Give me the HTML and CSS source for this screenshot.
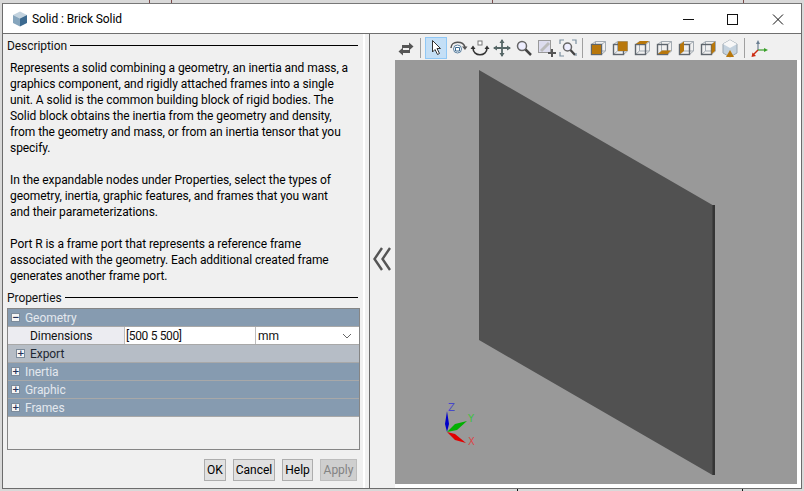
FILE: index.html
```html
<!DOCTYPE html>
<html lang="en">
<head>
<meta charset="utf-8">
<title>Solid : Brick Solid</title>
<link rel="stylesheet" href="styles.css">
</head>
<body>
<div class="window">
  <header class="titlebar">
    <svg class="app-icon" width="16" height="16" viewBox="0 0 16 16">
      <polygon points="8,0.5 15,4 8,7.5 1,4" fill="#c3d3df"/>
      <polygon points="1,4 8,7.5 8,15.5 1,12" fill="#86a5bd"/>
      <polygon points="15,4 8,7.5 8,15.5 15,12" fill="#3c6a90"/>
    </svg>
    <span class="title">Solid : Brick Solid</span>
    <div class="controls">
      <svg class="ctl" width="45" height="12" viewBox="0 0 45 12"><path d="M17 6.500H28" stroke="#111" fill="none"/></svg>
      <svg class="ctl" width="45" height="12" viewBox="0 0 45 12"><rect x="16.500" y="1.500" width="10" height="10" stroke="#111" fill="none"/></svg>
      <svg class="ctl" width="45" height="12" viewBox="0 0 45 12"><path d="M17 1.500L27 11.500M27 1.500L17 11.500" stroke="#111" fill="none"/></svg>
    </div>
  </header>
  <div class="body">
    <section class="left">
      <div class="legend"><span>Description</span><i></i></div>
      <div class="desc">
        <p>Represents a solid combining a geometry, an inertia and mass, a<br>graphics component, and rigidly attached frames into a single<br>unit. A solid is the common building block of rigid bodies. The<br>Solid block obtains the inertia from the geometry and density,<br>from the geometry and mass, or from an inertia tensor that you<br>specify.</p>
        <p>In the expandable nodes under Properties, select the types of<br>geometry, inertia, graphic features, and frames that you want<br>and their parameterizations.</p>
        <p>Port R is a frame port that represents a reference frame<br>associated with the geometry. Each additional created frame<br>generates another frame port.</p>
      </div>
      <div class="legend"><span>Properties</span><i></i></div>
      <div class="table">
        <div class="row head"><b class="box">&#8722;</b>Geometry</div>
        <div class="row param">
          <div class="cell label">Dimensions</div>
          <div class="cell value">[500 5 500]</div>
          <div class="cell unit">mm
            <svg width="10" height="6" viewBox="0 0 10 6"><path d="M1 1L5 5L9 1" stroke="#666" fill="none"/></svg>
          </div>
        </div>
        <div class="row sub"><b class="box">+</b>Export</div>
        <div class="row head"><b class="box">+</b>Inertia</div>
        <div class="row head"><b class="box">+</b>Graphic</div>
        <div class="row head"><b class="box">+</b>Frames</div>
      </div>
      <div class="buttons">
        <button class="btn btn-ok">OK</button>
        <button class="btn btn-cancel">Cancel</button>
        <button class="btn btn-help">Help</button>
        <button class="btn btn-apply" disabled>Apply</button>
      </div>
    </section>
    <div class="splitter">
      <svg width="20" height="24" viewBox="0 0 20 24"><path d="M9 1L1.500 12L9 23M17 1L9.500 12L17 23" stroke="#555" stroke-width="2.400" fill="none"/></svg>
    </div>
    <section class="right">
      <div class="toolbar">
        <svg class="tool" width="22" height="22" viewBox="0 0 22 22"><path d="M7 8H14V5.500L18.500 9.500L14 13.500V11H7Z" fill="#555"/><path d="M15 13H8V10.500L3.500 14.500L8 18.500V16H15Z" fill="#555"/></svg>
        <span class="sep"></span>
        <span class="tool active">
          <svg width="22" height="21" viewBox="0 0 22 21"><path d="M7.500 3.500V15L10 12.500L12.500 17.500L14.500 16.500L12 11.500H15.500Z" fill="#fff" stroke="#333"/></svg>
        </span>
        <svg class="tool" width="22" height="22" viewBox="0 0 22 22"><path d="M4 11C4 3.500 16 3.500 18 10" stroke="#555" stroke-width="1.500" fill="none"/><path d="M15 9.500H20.500L18 13Z" fill="#555"/><circle cx="10.500" cy="12" r="4" fill="#fff" stroke="#5b7f9f"/><path d="M8.500 10.500H12.500V14H8.500Z" fill="none" stroke="#3c6a90"/></svg>
        <svg class="tool" width="22" height="22" viewBox="0 0 22 22"><rect x="9" y="4" width="4" height="4" fill="#fff" stroke="#777"/><path d="M4 11C4 20 18 20 18 11" stroke="#333" stroke-width="1.600" fill="none"/><path d="M1.500 12H6.500L4 8.500ZM15.500 12H20.500L18 8.500Z" fill="#333"/></svg>
        <svg class="tool" width="22" height="22" viewBox="0 0 22 22"><path d="M11 3V19M3 11H19" stroke="#566" stroke-width="1.800"/><path d="M11 2L13.500 6H8.500ZM11 20L13.500 16H8.500ZM2 11L6 8.500V13.500ZM20 11L16 8.500V13.500Z" fill="#566"/></svg>
        <svg class="tool" width="22" height="22" viewBox="0 0 22 22"><circle cx="9" cy="9" r="4.500" fill="#eef" stroke="#666" stroke-width="1.500"/><path d="M12.500 12.500L18 18" stroke="#444" stroke-width="2.500"/></svg>
        <svg class="tool" width="22" height="22" viewBox="0 0 22 22"><rect x="3.500" y="3.500" width="12" height="12" fill="#dde" stroke="#999"/><path d="M6 14L14 6" stroke="#bbb" stroke-width="3"/><path d="M17 12V20M13 16H21" stroke="#555" stroke-width="2"/></svg>
        <svg class="tool" width="22" height="22" viewBox="0 0 22 22"><circle cx="10.500" cy="10" r="4" fill="#eef" stroke="#666" stroke-width="1.500"/><path d="M13.500 13L18 18" stroke="#444" stroke-width="2.300"/><path d="M3 7V3H7M15 3H19V7M3 15V19H7M19 16V19" stroke="#7b8f9f" stroke-width="1.200" fill="none"/></svg>
        <span class="sep"></span>
        <svg class="tool" width="22" height="22" viewBox="0 2 22 22"><use href="#cube"/><rect x="4.500" y="9.500" width="10" height="10" fill="#b8770b" stroke="#5f666d"/></svg>
        <svg class="tool" width="22" height="22" viewBox="0 2 22 22"><use href="#cube"/><rect x="9" y="6.500" width="9.500" height="9.500" fill="#b8770b"/></svg>
        <svg class="tool" width="22" height="22" viewBox="0 2 22 22"><use href="#cube"/><polygon points="5,9 9,6 18,6 14.500,9" fill="#b8770b"/></svg>
        <svg class="tool" width="22" height="22" viewBox="0 2 22 22"><use href="#cube"/><polygon points="5,19 9,15.500 18,15.500 14.500,19" fill="#b8770b"/></svg>
        <svg class="tool" width="22" height="22" viewBox="0 2 22 22"><use href="#cube"/><polygon points="5,9.500 9,6.500 9,16 5,19" fill="#b8770b"/></svg>
        <svg class="tool" width="22" height="22" viewBox="0 2 22 22"><use href="#cube"/><polygon points="14.500,9.500 18,6.500 18,16 14.500,19" fill="#b8770b"/></svg>
        <svg class="tool" width="22" height="22" viewBox="0 0 22 22"><polygon points="11,3 18,7 18,16 11,20 4,16 4,7" fill="#c4d2de" stroke="#9aa6b0"/><polygon points="11,3 18,7 11,11 4,7" fill="#f7f7f7"/><polygon points="11,13 15,20 7,20" fill="#b8770b"/></svg>
        <span class="sep"></span>
        <svg class="tool" width="22" height="22" viewBox="0 0 22 22"><path d="M9 5V13" stroke="#6b7f92" stroke-width="1.200"/><path d="M9 3L11 7H7Z" fill="#6b7f92"/><path d="M9 13H16" stroke="#3aa02a" stroke-width="1.200"/><path d="M19 13L15 11V15Z" fill="#3aa02a"/><path d="M9 13L4 18" stroke="#cc2a10" stroke-width="1.500"/><path d="M2.500 20L3.500 15.500L7 19Z" fill="#cc2a10"/></svg>
        <svg class="defs" width="0" height="0"><defs><g id="cube"><path d="M4.500 9.500L8.500 6.500H18.500V16L14.500 19.500M14.500 9.500L18.500 6.500M8.500 6.500V16H18.500M8.500 16L4.500 19.500" fill="none" stroke="#a3abb2"/><rect x="4.500" y="9.500" width="10" height="10" fill="none" stroke="#5f666d" stroke-width="1.400"/></g></defs></svg>
      </div>
      <div class="viewport">
        <svg class="scene" width="402" height="424" viewBox="395 60 402 424">
          <polygon points="479,70 712.500,205 715,205 715,475 712.500,475 479,340" fill="#515151"/>
          <polygon points="712.500,205 715,205 715,475 712.500,475" fill="#353535"/>
          <path d="M447 432L445 424L447 411L449 424Z" fill="#0000c8"/>
          <path d="M447 432L455 424L467 421L457 430Z" fill="#00b000"/>
          <path d="M447 432L455 434L466 443L455 440Z" fill="#e00000"/>
          <text class="ax ax-z" x="448" y="411">Z</text>
          <text class="ax ax-y" x="468" y="422">Y</text>
          <text class="ax ax-x" x="468" y="445">X</text>
        </svg>
      </div>
    </section>
  </div>
</div>
</body>
</html>
```
FILE: styles.css
```css
* { box-sizing: border-box; }
html, body { margin: 0; padding: 0; }
body {
  width: 804px;
  height: 491px;
  overflow: hidden;
  padding: 3px 2px 0 2px;
  background:
    linear-gradient(#7a4a4a, #7a4a4a) 149px 0 / 1px 3px no-repeat,
    linear-gradient(#7a4a4a, #7a4a4a) 171px 0 / 1px 3px no-repeat,
    linear-gradient(#7a4a4a, #7a4a4a) 492px 0 / 1px 3px no-repeat,
    linear-gradient(#7a4a4a, #7a4a4a) 743px 0 / 1px 3px no-repeat,
    linear-gradient(#111, #111) 742px 489px / 1px 2px no-repeat,
    linear-gradient(#111, #111) 517px 489px / 1px 2px no-repeat,
    #d9d9d9;
  font-family: "Roboto", "Liberation Sans", sans-serif;
  font-size: 12px;
  letter-spacing: -0.065px;
  color: #111;
}
.window {
  width: 800px;
  height: 486px;
  display: flex;
  flex-direction: column;
  background: #fff;
  border: 1px solid #6c6c6c;
  border-top-color: #777;
}
.titlebar {
  height: 30px;
  flex: none;
  display: flex;
  align-items: center;
  padding-left: 9px;
  background: #fff;
  border-bottom: 1px solid #6f6f6f;
  color: #000;
}
.app-icon { flex: none; margin-top: 1px; }
.title { margin-left: 4px; font-size: 12px; letter-spacing: -0.1px; }
.controls { margin-left: auto; display: flex; }
.ctl { display: block; }
.body { flex: 1; display: flex; min-height: 0; background: #f0f0f0; }
.left {
  width: 362px;
  flex: none;
  display: flex;
  flex-direction: column;
  background: #f0f0f0;
  border-right: 2px solid #fff;
  padding: 4px 1px 0 4px;
}
.legend { display: flex; align-items: center; height: 16px; padding-right: 4px; }
.legend span { margin-right: 3px; }
.legend i { flex: 1; height: 1px; background: #000; margin-top: -1px; }
.desc { height: 236px; padding: 6px 0 0 3px; line-height: 16px; color: #000; }
.desc p { margin: 0 0 16px; }
.table {
  margin-top: 2px;
  width: 353px;
  height: 142px;
  border: 1px solid #858585;
  background: #f0f0f0;
}
.row {
  height: 18px;
  display: flex;
  align-items: center;
  border-bottom: 1px solid #a8a8a8;
  padding-left: 3px;
}
.head { background: #869bb0; color: #e3e8ee; }
.sub { background: #b6bdc6; color: #1e2733; padding-left: 8px; }
.box {
  width: 9px;
  height: 9px;
  margin-right: 5px;
  border: 1px solid #7c8b9b;
  background: #f4f4f4;
  color: #25345a;
  font: 700 9px/7px "DejaVu Sans", sans-serif;
  text-align: center;
  overflow: hidden;
}
.param { padding: 0; background: #fff; border-bottom: 1px solid #a8a8a8; }
.cell { height: 17px; display: flex; align-items: center; }
.label { width: 117px; padding-left: 22px; background: #ececf1; border-right: 1px solid #bdbdbd; }
.value { width: 131px; padding-left: 1px; border-right: 1px solid #bdbdbd; background: #fff; letter-spacing: -0.35px; }
.unit { flex: 1; padding-left: 2px; justify-content: space-between; padding-right: 7px; background: #fff; }
.buttons {
  display: flex;
  justify-content: flex-end;
  gap: 7px;
  margin-top: 9px;
  padding-right: 5px;
}
.btn {
  height: 22px;
  padding: 0;
  border: 1px solid #adadad;
  background: #e1e1e1;
  font: 12px "Roboto", "Liberation Sans", sans-serif;
  color: #000;
}
.btn-ok { width: 22px; }
.btn-cancel { width: 42px; }
.btn-help { width: 31px; }
.btn-apply { width: 37px; background: #cfcfcf; border-color: #bdbdbd; color: #838383; }
.splitter {
  width: 26px;
  flex: none;
  display: flex;
  align-items: center;
  padding: 0 0 5px 3px;
  margin-left: 4px;
  border-left: 1px solid #6c6c6c;
}
.right { flex: 1; display: flex; flex-direction: column; min-width: 0; background: #fff; }
.toolbar {
  height: 26px;
  flex: none;
  display: flex;
  align-items: center;
  padding: 1px 0 0 0;
  background: #f0f0f0;
}
.tool { flex: none; display: block; width: 22px; height: 22px; }
.active {
  height: 22px;
  background: #c4dff6;
  border: 1px solid #90c8f6;
}
.active svg { display: block; margin: -1px; }
.sep { width: 1px; height: 20px; margin: 0 4px 0 3px; background: #a0a0a0; flex: none; }
.defs { position: absolute; }
.viewport {
  width: 402px;
  height: 424px;
  flex: none;
  background: #999;
}
.scene { display: block; }
.ax { font: 10px "DejaVu Sans", sans-serif; }
.ax-z { fill: #4848c8; }
.ax-y { fill: #40c040; }
.ax-x { fill: #d84848; }
```
